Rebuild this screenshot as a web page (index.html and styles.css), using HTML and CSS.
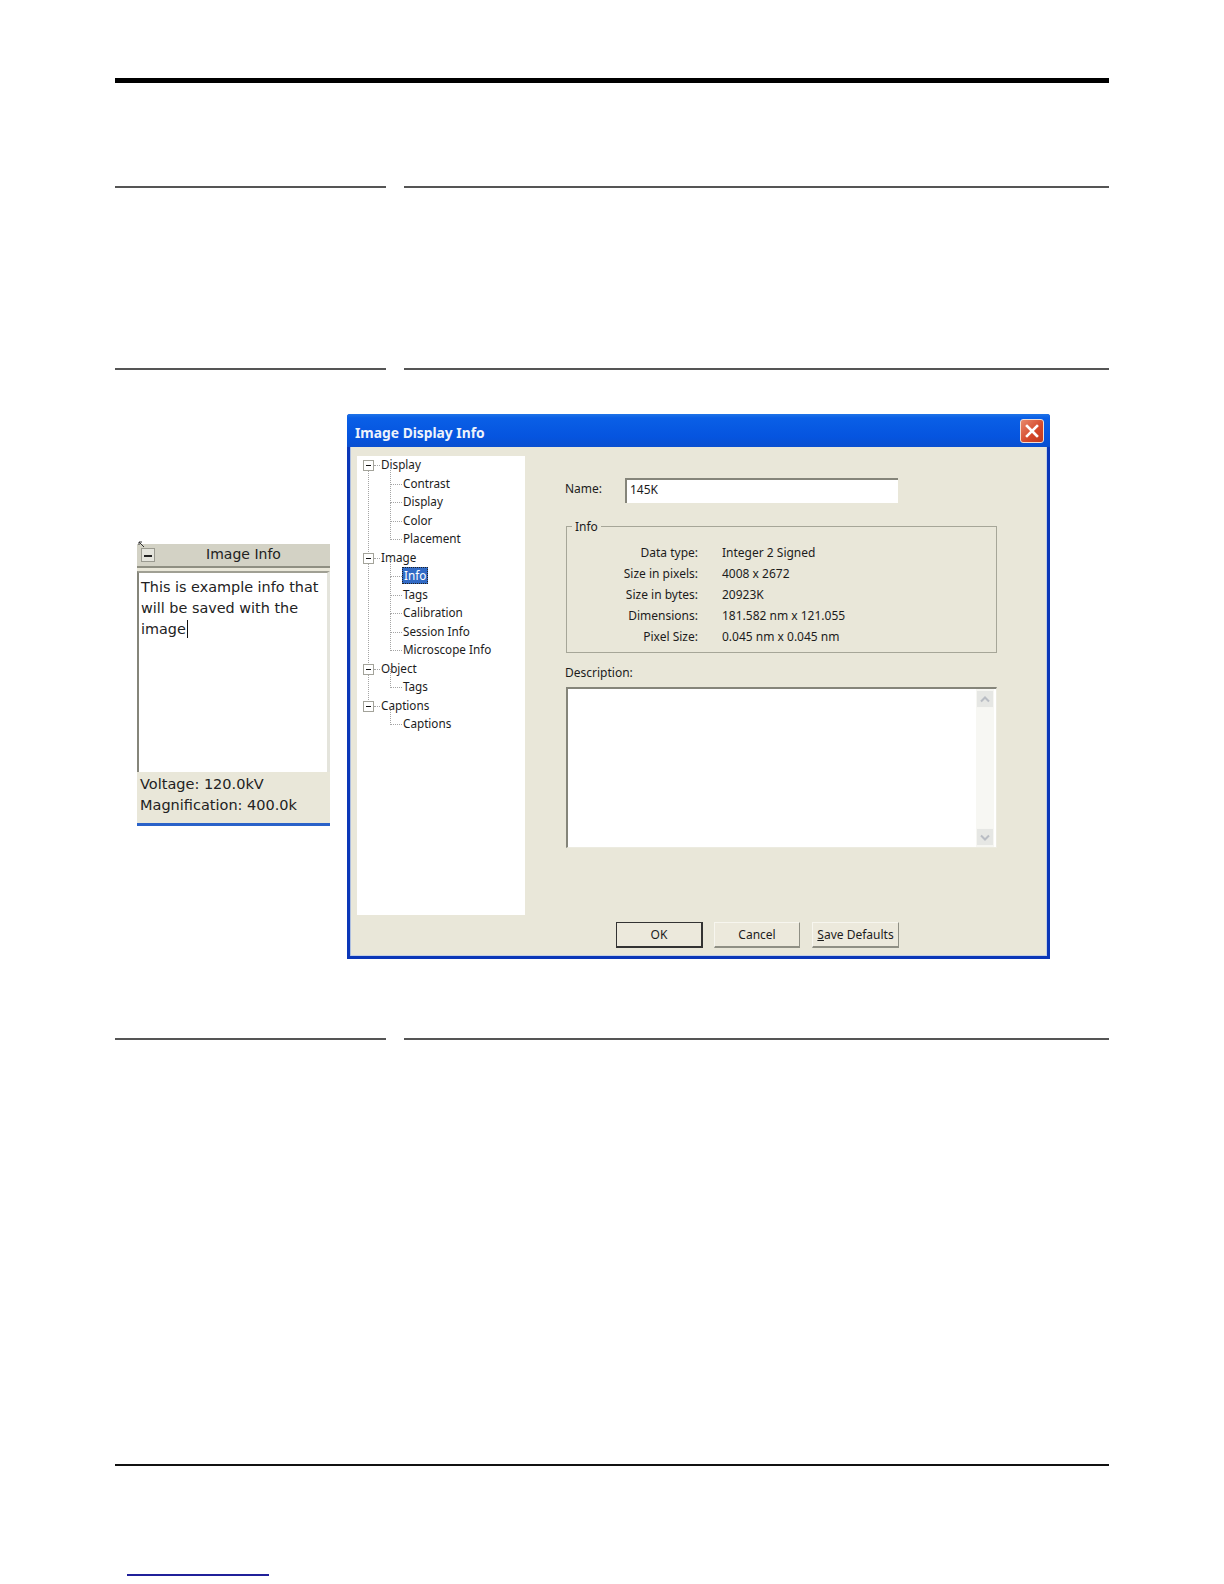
FILE: index.html
```html
<!DOCTYPE html>
<html lang="en">
<head>
<meta charset="utf-8">
<title>Image Display Info</title>
<link rel="stylesheet" href="styles.css">
</head>
<body>
<main class="page">
  <div class="top-bar"></div>
  <div class="rule-row first"><span></span><span></span></div>
  <div class="rule-row second"><span></span><span></span></div>

  <section class="figure">
    <div class="panel">
      <div class="panel-title">
        <svg class="panel-cursor" width="8" height="8" viewBox="0 0 8 8"><path d="M1 1l5 5M1 1v3M1 1h3" fill="#fff" stroke="#333" stroke-width="1"/></svg>
        <span class="panel-minus"></span>
        <span class="panel-title-text">Image Info</span>
      </div>
      <div class="panel-text">This is example info that will be saved with the image<span class="caret"></span></div>
      <div class="panel-status">
        <div>Voltage: 120.0kV</div>
        <div>Magnification: 400.0k</div>
      </div>
    </div>

    <div class="dialog">
      <header class="titlebar">
        <span class="title-text">Image Display Info</span>
        <span class="close">
          <svg width="16" height="16" viewBox="0 0 16 16"><path d="M3 3l10 10M13 3L3 13" stroke="#fff" stroke-width="2.6" stroke-linecap="square"/></svg>
        </span>
      </header>
      <div class="dialog-body">
        <nav class="tree">
          <div class="node"><span class="box"></span>Display</div>
          <div class="leaf">Contrast</div>
          <div class="leaf">Display</div>
          <div class="leaf">Color</div>
          <div class="leaf">Placement</div>
          <div class="node"><span class="box"></span>Image</div>
          <div class="leaf"><span class="selected">Info</span></div>
          <div class="leaf">Tags</div>
          <div class="leaf">Calibration</div>
          <div class="leaf">Session Info</div>
          <div class="leaf">Microscope Info</div>
          <div class="node"><span class="box"></span>Object</div>
          <div class="leaf">Tags</div>
          <div class="node last"><span class="box"></span>Captions</div>
          <div class="leaf">Captions</div>
        </nav>
        <div class="content">
          <div class="name-row">
            <span class="name-label">Name:</span>
            <div class="name-input">145K</div>
          </div>
          <fieldset class="info-group">
            <legend>Info</legend>
            <dl class="info-list">
              <dt>Data type:</dt><dd>Integer 2 Signed</dd>
              <dt>Size in pixels:</dt><dd>4008 x 2672</dd>
              <dt>Size in bytes:</dt><dd>20923K</dd>
              <dt>Dimensions:</dt><dd>181.582 nm x 121.055</dd>
              <dt>Pixel Size:</dt><dd>0.045 nm x 0.045 nm</dd>
            </dl>
          </fieldset>
          <div class="desc-label">Description:</div>
          <div class="desc-box">
            <div class="scrollbar">
              <span class="scroll-btn"><svg width="10" height="7" viewBox="0 0 10 7"><path d="M1 5.5l4-4 4 4" fill="none" stroke="#b9bdc4" stroke-width="2"/></svg></span>
              <span class="scroll-btn"><svg width="10" height="7" viewBox="0 0 10 7"><path d="M1 1.5l4 4 4-4" fill="none" stroke="#b9bdc4" stroke-width="2"/></svg></span>
            </div>
          </div>
          <div class="buttons">
            <button class="btn default" type="button">OK</button>
            <button class="btn" type="button">Cancel</button>
            <button class="btn save" type="button"><u>S</u>ave Defaults</button>
          </div>
        </div>
      </div>
    </div>
  </section>

  <div class="rule-row third"><span></span><span></span></div>
  <div class="bottom-rule"></div>
  <div class="link-line"></div>
</main>
</body>
</html>
```
FILE: styles.css
```css
* { box-sizing: border-box; }
html, body { margin: 0; padding: 0; background: #fff; }
.page { width: 1224px; height: 1584px; padding: 78px 115px 0; overflow: hidden; font-family: "Noto Sans", sans-serif; color: #1c1c1c; }

.top-bar { height: 5px; background: #000; }
.rule-row { display: flex; gap: 18px; height: 2px; }
.rule-row span { display: block; height: 2px; background: #555; }
.rule-row span:first-child { width: 271px; }
.rule-row span:last-child { flex: 1; }
.rule-row.first { margin-top: 103px; }
.rule-row.second { margin-top: 180px; }
.rule-row.third { margin-top: 79px; }
.bottom-rule { height: 2px; margin-top: 424px; background: #111; }
.link-line { width: 142px; height: 2px; margin: 108px 0 0 12px; background: #20209a; }

.figure { display: flex; align-items: center; gap: 17px; margin: 44px 0 0 22px; }

/* left panel */
.panel { width: 193px; height: 282px; margin-bottom: 4px; display: flex; flex-direction: column; background: #e9e7d9; border-bottom: 3px solid #2a62c9; font-family: "DejaVu Sans", sans-serif; }
.panel-title { position: relative; height: 24px; flex: none; display: flex; align-items: center; justify-content: center; padding-bottom: 2px; background: #d3d2c5; border-bottom: 2px solid #8f8f82; font-size: 14px; color: #222; }
.panel-title-text { margin-left: 20px; }
.panel-cursor { position: absolute; left: 1px; top: -3px; }
.panel-minus { position: absolute; left: 4px; top: 4px; width: 14px; height: 14px; background: #e4e4dc; border: 1px solid #9a9a90; }
.panel-minus::before { content: ""; position: absolute; left: 2px; right: 2px; top: 6px; height: 2px; background: #222; }
.panel-text { height: 201px; margin-top: 3px; padding: 4px 0 0 2px; background: #fff; border-left: 2px solid #85857a; border-top: 2px solid #a0a094; border-right: 3px solid #e4e4dc; flex: none; font-size: 14.4px; line-height: 21px; color: #222; }
.caret { display: inline-block; width: 1px; height: 18px; margin-left: 1px; vertical-align: -4px; background: #111; }
.panel-status { flex: 1; padding: 2px 0 0 3px; font-size: 14.5px; line-height: 21.5px; color: #222; }

/* dialog */
.dialog { width: 703px; height: 545px; display: flex; flex-direction: column; background: #0b37b8; padding: 0 3px 3px; border-radius: 3px 3px 0 0; }
.titlebar { height: 33px; flex: none; margin: 0 -3px; padding: 0 6px 0 8px; display: flex; align-items: center; justify-content: space-between; background: linear-gradient(#1f74e8 0, #0a5fe6 12%, #0554df 70%, #0a4fd0 100%); border-radius: 3px 3px 0 0; }
.title-text { padding-top: 3px; color: #eef3fb; font-weight: 700; font-size: 13.8px; }
.close { width: 24px; height: 24px; display: flex; align-items: center; justify-content: center; background: linear-gradient(135deg, #e88a6c, #d4472a 60%, #c03a20); border: 1px solid #f1ddd3; border-radius: 3px; }
.dialog-body { flex: 1; display: flex; padding: 9px 0 0 7px; background: #e9e7d9; font-size: 12px; box-shadow: inset 1px 0 0 #aebfe0, inset -1px 0 0 #c4d0e4, inset 0 -1px 0 #c4d0e4; }

.tree { width: 168px; height: 459px; flex: none; background: #fff; font-size: 11.7px; }
.node, .leaf { position: relative; height: 18.5px; line-height: 17px; white-space: nowrap; }
.node { padding-left: 24px; }
.leaf { padding-left: 46px; }
.box { position: absolute; left: 6px; top: 4px; z-index: 1; width: 11px; height: 11px; background: #fff; border: 1px solid #a3a39a; }
.box::before { content: ""; position: absolute; left: 2px; right: 2px; top: 4px; height: 1px; background: #111; }
.node::after { content: ""; position: absolute; left: 17px; width: 6px; top: 9px; border-top: 1px dotted #a5a5a5; }
.node::before { content: ""; position: absolute; left: 11px; top: 9px; height: 37px; border-left: 1px dotted #a5a5a5; }
.node:nth-child(1)::before { height: 93px; }
.node:nth-child(6)::before { height: 111px; }
.node:nth-child(12)::before { height: 37px; }
.node.last::before { display: none; }
.leaf::before { content: ""; position: absolute; left: 33px; top: -9px; width: 11px; height: 18px; border-left: 1px dotted #a5a5a5; border-bottom: 1px dotted #a5a5a5; }
.selected { display: inline-block; margin-left: -1px; padding: 0 2px; height: 17px; line-height: 16px; color: #fff; background: #316ac5; outline: 1px dotted #222; outline-offset: -1px; }

.content { margin-left: 40px; flex: none; width: 440px; }
.name-row { display: flex; align-items: flex-start; margin-top: 22px; }
.name-label { width: 60px; line-height: 22px; }
.name-input { width: 273px; height: 25px; padding: 0 0 0 3px; line-height: 20px; background: #fff; border-top: 2px solid #85857a; border-left: 2px solid #85857a; }
.info-group { position: relative; width: 431px; height: 127px; margin: 23px 0 0 1px; padding: 0; border: 1px solid #a6a698; border-radius: 0; }
.info-group legend { position: absolute; left: 5px; top: -9px; padding: 0 3px; line-height: 18px; background: #e9e7d9; }
.info-list { display: grid; grid-template-columns: 131px 1fr; grid-auto-rows: 20.9px; column-gap: 24px; margin: 16px 0 0; line-height: 20.9px; }
.info-list dt { text-align: right; }
.info-list dd { margin: 0; }
.desc-label { margin-top: 11px; line-height: 18px; }
.desc-box { display: flex; justify-content: flex-end; width: 431px; height: 161px; margin: 5px 0 0 1px; padding-right: 2px; background: #fff; border-top: 2px solid #85857a; border-left: 2px solid #85857a; border-right: 1px solid #ecebe0; border-bottom: 1px solid #ecebe0; }
.scrollbar { width: 18px; display: flex; flex-direction: column; justify-content: space-between; background: #f7f7f3; padding: 1px 0; }
.scroll-btn { height: 18px; display: flex; align-items: center; justify-content: center; background: #e6e7e4; border: 1px solid #f6f6f2; }
.buttons { display: flex; gap: 11px; margin: 74px 0 0 51px; }
.btn { width: 86px; height: 26px; padding: 0; font: inherit; color: #1c1c1c; background: #ece9dc; border: 1px solid #f7f6ef; border-right-color: #8f8f84; border-bottom: 2px solid #8f8f84; }
.btn.default { width: 87px; border: 1px solid #333; border-bottom-width: 2px; border-right-width: 2px; }
.btn.save { width: 87px; margin-left: 1px; }
```
